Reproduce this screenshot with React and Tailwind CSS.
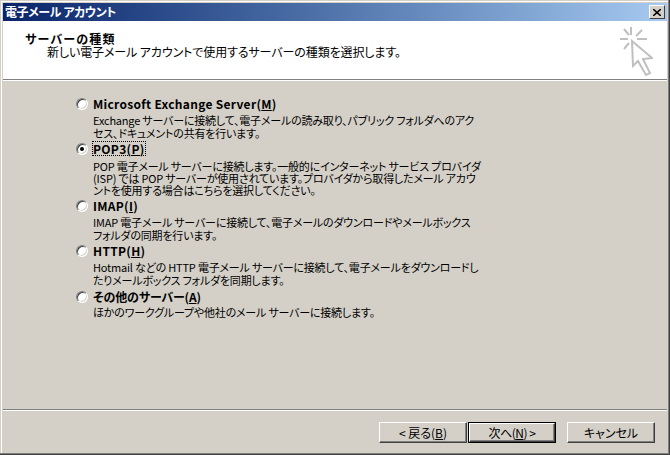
import React from 'react';

const font = { fontFamily: '"Noto Sans CJK JP", sans-serif' };

const options = [
    {
        before: 'Microsoft Exchange Server(',
        key: 'M',
        row: 'mb-[2px]',
        track: 'tracking-[0.3px]',
        body: 'mt-[4px] leading-[13px]',
        lines: ['Exchange サーバーに接続して、電子メールの読み取り、パブリック フォルダへのアク', 'セス、ドキュメントの共有を行います。'],
    },
    {
        before: 'POP3(',
        key: 'P',
        checked: true,
        row: 'mb-[3px]',
        track: 'tracking-[0.3px]',
        body: 'mt-[5px] leading-[12px]',
        lines: ['POP 電子メール サーバーに接続します。一般的にインターネット サービス プロバイダ', '(ISP) では POP サーバーが使用されています。プロバイダから取得したメール アカウ', 'ントを使用する場合はこちらを選択してください。'],
    },
    {
        before: 'IMAP(',
        key: 'I',
        row: 'mb-[2px]',
        track: 'tracking-[0.3px]',
        body: 'mt-[4px] leading-[13px]',
        lines: ['IMAP 電子メール サーバーに接続して、電子メールのダウンロードやメールボックス', 'フォルダの同期を行います。'],
    },
    {
        before: 'HTTP(',
        key: 'H',
        row: 'mb-[3px]',
        track: 'tracking-[0.3px]',
        body: 'mt-[4px] leading-[13px]',
        lines: ['Hotmail などの HTTP 電子メール サーバーに接続して、電子メールをダウンロードし', 'たりメールボックス フォルダを同期します。'],
    },
    {
        before: 'その他のサーバー(',
        key: 'A',
        track: 'tracking-[-0.15px]',
        body: 'mt-[3px] leading-[13px]',
        lines: ['ほかのワークグループや他社のメール サーバーに接続します。'],
    },
];

const Radio = ({ checked }) => (
    <div className="w-[12px] h-[12px] rounded-full bg-white border border-t-[#808080] border-l-[#808080] border-b-white border-r-white shadow-[inset_1px_1px_0_#404040,inset_-1px_-1px_0_#d4d0c8] flex items-center justify-center shrink-0">
        {checked && <div className="w-[4px] h-[4px] rounded-full bg-black" />}
    </div>
);

const ServerOption = ({ before, shortcut, checked, lines, row = '', track, body }) => (
    <div className={`flex flex-col ${row}`}>
        <div className="flex items-center h-[13px] gap-[5px]">
            <Radio checked={checked} />
            <span className={`text-[12px] leading-[13px] font-bold whitespace-nowrap text-black ${track} ${checked ? 'outline-1 outline-dotted outline-black' : ''}`}>
                {before}<span className="underline">{shortcut}</span>)
            </span>
        </div>
        <div className={`ml-[17px] text-[11px] tracking-[-0.2px] text-black whitespace-nowrap ${body}`}>
            {lines.map((line) => <div key={line}>{line}</div>)}
        </div>
    </div>
);

const WizardButton = ({ children, primary, className = '' }) => (
    <div className={`${primary ? 'border border-black' : ''} ${className}`}>
        <div className={`${primary ? 'h-[19px] w-[86px] tracking-[-0.5px]' : 'h-[21px] w-[88px]'} bg-[#d4d0c8] border border-t-white border-l-white border-b-[#404040] border-r-[#404040] shadow-[inset_-1px_-1px_0_#808080] flex items-center justify-center text-[12px] text-black whitespace-nowrap`}>
            {children}
        </div>
    </div>
);

const WizardCursor = () => (
    <svg width="34" height="52" viewBox="0 0 34 52" className="shrink-0" fill="none" stroke="#c0c0c0" strokeWidth="2">
        <path d="M1 13h8M18 13h10M12 1v8M5 3l5 6M23 4l-6 6M5 23l5-6" />
        <path d="M13 15L33 32L24 33L31 47L27 49L19 35L14 40Z" />
    </svg>
);

export default function App() {
    return (
        <div style={font} className="w-[670px] h-[455px] bg-[#d4d0c8] border-r border-b border-[#404040] overflow-hidden [font-feature-settings:'palt']">
            <div className="h-full flex flex-col border border-l-0 border-t-0 border-r-[#808080] border-b-[#808080]">
                <div className="h-full flex flex-col ml-px mt-px pl-px pt-px border-l border-t border-white pr-px pb-px">
                    {/* Title bar */}
                    <div className="h-[18px] shrink-0 flex items-center justify-between pl-[2px] pr-[2px] bg-gradient-to-r from-[#0a246a] to-[#a6caf0]">
                        <span className="text-[12px] font-bold tracking-[-0.4px] text-white whitespace-nowrap">電子メール アカウント</span>
                        <div className="w-[16px] h-[14px] bg-[#d4d0c8] border border-t-white border-l-white border-b-[#404040] border-r-[#404040] flex items-center justify-center">
                            <svg width="8" height="7" viewBox="0 0 8 7" stroke="black" strokeWidth="1.6" fill="none">
                                <path d="M0 0L8 7M8 0L0 7" />
                            </svg>
                        </div>
                    </div>

                    {/* Header */}
                    <div className="h-[59px] shrink-0 bg-white flex justify-between pl-[22px] pr-[14px] border-b border-[#808080]">
                        <div className="pt-[11px] text-black">
                            <div className="text-[12px] leading-[13px] font-bold tracking-[1.2px] whitespace-nowrap">サーバーの種類</div>
                            <div className="text-[12px] leading-[13px] tracking-[-0.1px] ml-[22px] whitespace-nowrap">新しい電子メール アカウントで使用するサーバーの種類を選択します。</div>
                        </div>
                        <div className="pt-[5px]">
                            <WizardCursor />
                        </div>
                    </div>
                    <div className="h-px shrink-0 bg-white" />

                    {/* Options */}
                    <div className="flex-1 flex flex-col pl-[73px] pt-[16px]">
                        {options.map((o) => (
                            <ServerOption key={o.key} before={o.before} shortcut={o.key} checked={o.checked} lines={o.lines} row={o.row} track={o.track} body={o.body} />
                        ))}
                    </div>

                    {/* Footer */}
                    <div className="shrink-0 h-[43px] border-t border-[#808080] shadow-[inset_0_1px_0_#ffffff] flex items-start pt-[12px] pl-[376px]">
                        <WizardButton>&lt; 戻る(<span className="underline">B</span>)</WizardButton>
                        <WizardButton primary className="ml-px">次へ(<span className="underline">N</span>) &gt;</WizardButton>
                        <WizardButton className="ml-[11px]">キャンセル</WizardButton>
                    </div>
                </div>
            </div>
        </div>
    );
}
